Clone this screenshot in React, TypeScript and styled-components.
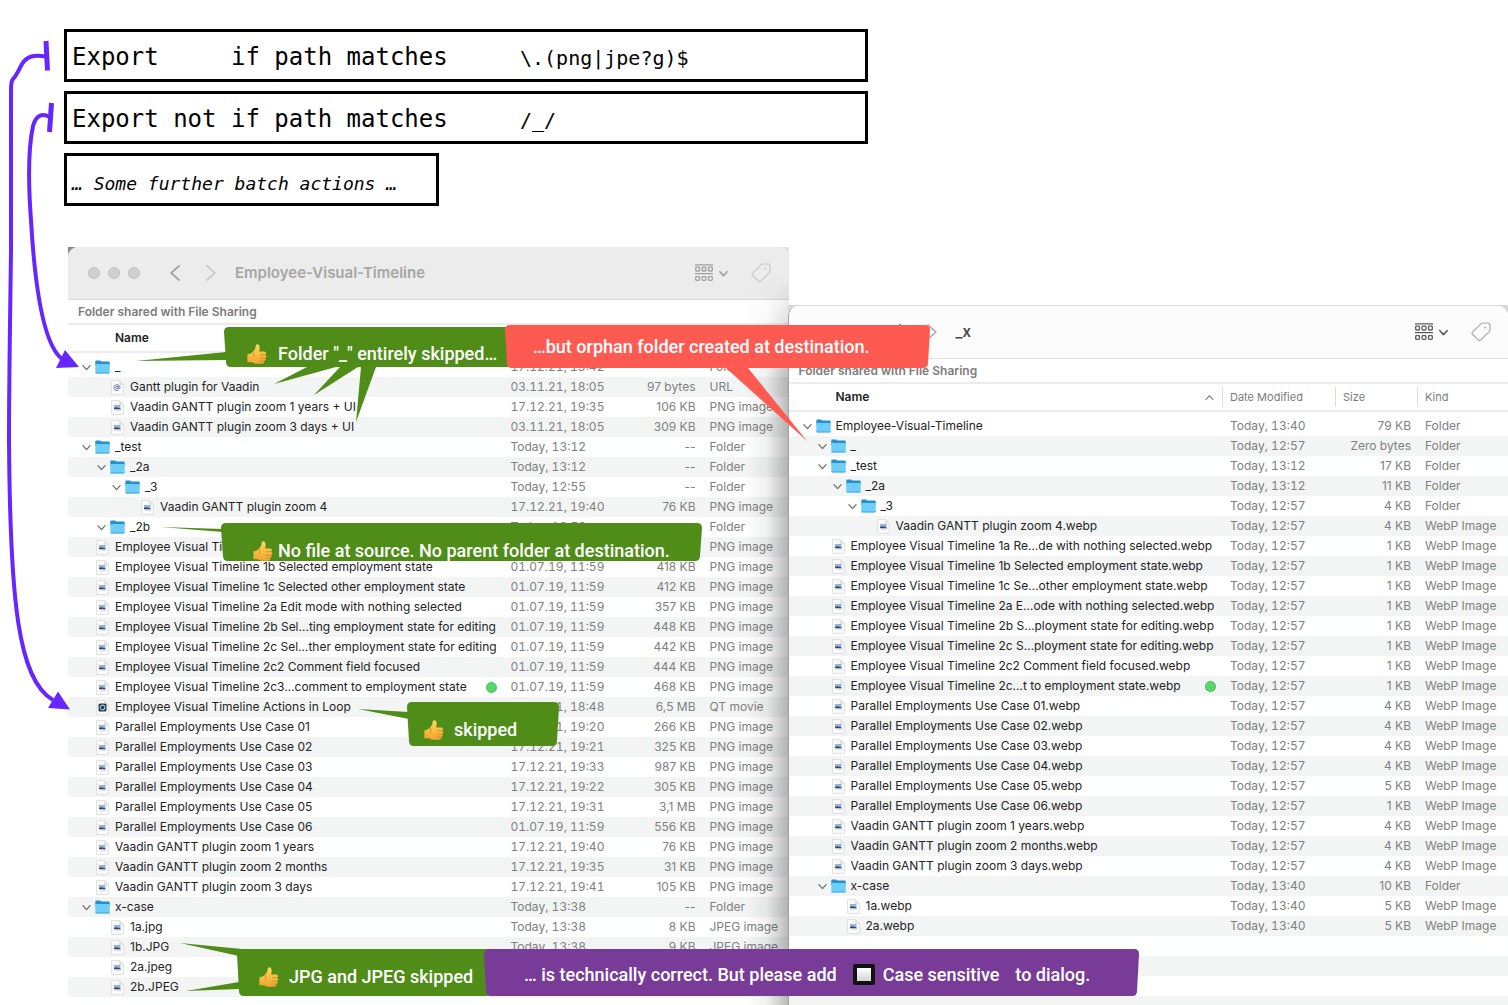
import React, { useId } from "react";
import styled, { createGlobalStyle } from "styled-components";

const uiFont = `Inter, "Liberation Sans", sans-serif`;
const monoFont = `"DejaVu Sans Mono", "Liberation Mono", monospace`;
const calloutFont = `Roboto, "Liberation Sans", sans-serif`;

const green = "#508d18";
const coral = "#ff5a52";
const purple = "#783b97";
const violet = "#6826ff";

const GlobalStyle = createGlobalStyle`
  * { box-sizing: border-box; }
  body { margin: 0; background: #fff; color: #232323; font-family: ${uiFont}; }
`;

const Canvas = styled.main`
  position: relative;
  display: flex;
  flex-direction: column;
  gap: 41px;
  height: 100vh;
  padding-top: 29px;
  overflow: hidden;
`;

const Rules = styled.section`
  display: flex;
  flex-direction: column;
  gap: 9px;
  padding-left: 64px;
  font-family: ${monoFont};
  color: #000;
`;

const Rule = styled.div<{ $short?: boolean }>`
  display: flex;
  align-items: center;
  width: ${(p) => (p.$short ? 375 : 804)}px;
  height: 53px;
  padding: 2px 5px 0;
  border: 3px solid #000;
  white-space: pre;
`;

const RuleText = styled.span`
  width: 448px;
  font-size: 24px;
  line-height: 28px;
`;

const RulePattern = styled.code`
  padding-top: 2px;
  font-family: inherit;
  font-size: 20px;
  line-height: 28px;
`;

const RuleNote = styled.em`
  padding-top: 6px;
  font-size: 18px;
  line-height: 24px;
`;

const Windows = styled.div`
  display: flex;
  flex: 1;
  min-height: 0;
  padding-left: 68px;
`;

const WindowSlot = styled.div<{ $front?: boolean }>`
  position: relative;
  flex: 1;
  min-width: 0;
  margin: ${(p) => (p.$front ? "58px 0 0 -1px" : "0")};
  padding-top: ${(p) => (p.$front ? 1 : 0)}px;
  overflow: hidden;
  background: ${(p) =>
    p.$front
      ? "linear-gradient(#d9d9d9, #d9d9d9 12px, #fff 12px)"
      : "linear-gradient(90deg, #8a8a8a 30px, #e2e2e2 30px)"};
  ${(p) =>
    !p.$front &&
    `&::after {
      content: "";
      position: absolute;
      inset: 30px 0 0 auto;
      width: 44px;
      background: linear-gradient(90deg, transparent, rgba(0,0,0,.06) 50%, rgba(0,0,0,.28));
      mask-image: linear-gradient(transparent, #000 100px);
      pointer-events: none;
    }`}
`;

const Window = styled.section<{ $front?: boolean }>`
  display: flex;
  flex-direction: column;
  height: 100%;
  overflow: hidden;
  border-radius: 10px 10px 0 0;
  background: #fff;
  border-left: ${(p) => (p.$front ? "1px solid #a2a2a2" : "0")};
`;

const Toolbar = styled.header<{ $front?: boolean }>`
  display: flex;
  align-items: center;
  flex: none;
  height: 53px;
  padding: 0 ${(p) => (p.$front ? 17 : 18)}px 0 20px;
  border-bottom: 1px solid ${(p) => (p.$front ? "#e2e2e2" : "#d8d8d8")};
  background: ${(p) => (p.$front ? "#fcfcfc" : "#ececec")};
  color: ${(p) => (p.$front ? "#5c5c5c" : "#a0a0a0")};
`;

const Lights = styled.div`
  display: flex;
  gap: 8px;
  width: 79px;
`;

const Light = styled.button`
  width: 12px;
  height: 12px;
  padding: 0;
  border: 1px solid #c2c2c2;
  border-radius: 50%;
  background: #d0d0d0;
`;

const ToolButton = styled.button<{ $gap?: number; $faint?: boolean }>`
  display: flex;
  align-items: center;
  gap: 6px;
  margin-right: ${(p) => p.$gap ?? 0}px;
  padding: 0;
  border: 0;
  background: none;
  color: inherit;
  opacity: ${(p) => (p.$faint ? 0.5 : 1)};
`;

const Title = styled.h2<{ $front?: boolean }>`
  flex: 1;
  margin: 0;
  font-size: 15px;
  line-height: 20px;
  font-weight: 600;
  color: ${(p) => (p.$front ? "#484848" : "#a6a6a6")};
`;

const SharedNote = styled.p`
  flex: none;
  margin: 0;
  padding-left: 10px;
  border-bottom: 2px solid #ececec;
  font-size: 12px;
  line-height: 23px;
  font-weight: 600;
  color: #7c7c7c;
`;

const Listing = styled.div<{ $front?: boolean }>`
  flex: 1;
  min-height: 0;
  overflow: hidden;
  background: ${(p) =>
    p.$front
      ? "repeating-linear-gradient(#fff 0 20px, #f3f5f5 20px 40px) 0 32px no-repeat"
      : "#fff"};
`;

const Table = styled.table`
  width: 100%;
  table-layout: fixed;
  border-collapse: separate;
  border-spacing: 0;
  font-size: 12px;
  line-height: 20px;
  tbody tr:nth-child(odd) td { background: #fff; }
  tbody tr:nth-child(even) td { background: #f3f5f5; }
`;

const Col = styled.col<{ $w?: number }>`
  width: ${(p) => (p.$w ? p.$w + "px" : "auto")};
`;

const Head = styled.th<{ $name?: boolean }>`
  height: 32px;
  padding: 0 0 6px ${(p) => (p.$name ? 47 : 0)}px;
  background: linear-gradient(#ececec, #ececec) 0 26px / 100% 2px no-repeat #fff;
  text-align: left;
  font-size: ${(p) => (p.$name ? 12 : 11)}px;
  font-weight: ${(p) => (p.$name ? 600 : 400)};
  color: ${(p) => (p.$name ? "#232323" : "#7c7c7c")};
`;

const HeadLabel = styled.div<{ $ruled?: boolean }>`
  display: flex;
  align-items: center;
  justify-content: space-between;
  height: 20px;
  padding: 0 8px 0 ${(p) => (p.$ruled ? 7 : 0)}px;
  border-left: ${(p) => (p.$ruled ? "1px solid #dcdcdc" : "0")};
  svg { color: #7c7c7c; }
`;

const Cell = styled.td<{ $right?: boolean; $date?: boolean }>`
  height: 20px;
  padding: 0 ${(p) => (p.$right ? 6 : 0)}px 0 ${(p) => (p.$right ? 0 : 8)}px;
  text-align: ${(p) => (p.$right ? "right" : "left")};
  font-variant-numeric: ${(p) => (p.$date ? "tabular-nums" : "normal")};
  color: #808080;
  white-space: nowrap;
`;

const NameCell = styled.td<{ $level: number }>`
  height: 20px;
  padding: 0 6px 0 ${(p) => 14 + 15 * p.$level}px;
  white-space: nowrap;
`;

const NameRow = styled.div`
  display: flex;
  align-items: center;
  height: 20px;
`;

const Twisty = styled.span`
  display: flex;
  width: 13px;
  flex: none;
  color: #6e6e6e;
`;

const IconBox = styled.span`
  display: flex;
  justify-content: center;
  width: 15px;
  margin-right: 5px;
  flex: none;
`;

const Dot = styled.span`
  width: 11px;
  height: 11px;
  margin-left: auto;
  border: 1px solid #41c558;
  border-radius: 50%;
  background: #57d66b;
`;

const CalloutBox = styled.aside<{ $x: number; $y: number; $w: number; $h: number; $pad: number; $drop: number }>`
  position: absolute;
  left: ${(p) => p.$x}px;
  top: ${(p) => p.$y}px;
  display: flex;
  align-items: center;
  width: ${(p) => p.$w}px;
  height: ${(p) => p.$h}px;
  padding: ${(p) => p.$drop}px 0 0 ${(p) => p.$pad}px;
  font-family: ${calloutFont};
  font-size: 18px;
  line-height: 24px;
  font-weight: 500;
  color: #fff;
  white-space: nowrap;
`;

const Bubble = styled.svg`
  position: absolute;
  left: 0;
  top: 0;
  overflow: visible;
`;

const CalloutText = styled.span`
  position: relative;
`;

const ThumbSvg = styled.svg<{ $gap: number }>`
  position: relative;
  flex: none;
  margin-right: ${(p) => p.$gap}px;
`;

const TickLabel = styled.label`
  position: relative;
  display: flex;
  align-items: center;
  gap: 8px;
  margin: 0 16px;
`;

const Tick = styled.input`
  appearance: none;
  width: 22px;
  height: 21px;
  margin: 0;
  border: 4px solid #111;
  border-radius: 2px;
  background: linear-gradient(#fff, #d4d4d4);
`;

const Arrows = styled.svg`
  position: absolute;
  left: 0;
  top: 0;
  pointer-events: none;
`;

function Chevron({ dir, size = 9, width = 1.4 }: { dir: "down" | "left" | "right" | "up"; size?: number; width?: number }) {
  const d = {
    down: "M1 3 L5 7.4 L9 3",
    up: "M1 7.4 L5 3 L9 7.4",
    left: "M7.6 0.6 L2.6 5 L7.6 9.4",
    right: "M2.4 0.6 L7.4 5 L2.4 9.4",
  }[dir];
  return (
    <svg width={size} height={size} viewBox="0 0 10 10" fill="none" stroke="currentColor" strokeWidth={width} strokeLinecap="round" strokeLinejoin="round">
      <path d={d} />
    </svg>
  );
}

function GroupIcon() {
  return (
    <svg width="18" height="18" viewBox="0 0 18 18" fill="none" stroke="currentColor" strokeWidth="1.3">
      <path d="M0 .8H18M0 9.6H18" />
      {[0, 1, 2].map((i) => (
        <g key={i}>
          <rect x={0.7 + i * 6.4} y="3.2" width="3.8" height="3.8" rx=".8" />
          <rect x={0.7 + i * 6.4} y="12.6" width="3.8" height="3.8" rx=".8" />
        </g>
      ))}
    </svg>
  );
}

function TagIcon() {
  return (
    <svg width="20" height="20" viewBox="0 0 20 20" fill="none" stroke="currentColor" strokeWidth="1.2" strokeLinejoin="round">
      <path d="M1.4 10.4 L10 1.8 Q10.8 1 12 1 L16.4 1 Q19 1 19 3.6 L19 7.6 Q19 8.8 18.2 9.6 L9.6 18.2 Q8.6 19.2 7.6 18.2 L1.4 12.2 Q.6 11.3 1.4 10.4 Z" />
      <circle cx="14" cy="5.6" r=".9" fill="currentColor" stroke="none" />
    </svg>
  );
}

function FolderIcon() {
  return (
    <svg width="15" height="14" viewBox="0 0 15 14">
      <path d="M.3 1.6Q.3.5 1.4.5H5l1.3 1H13.6Q14.7 1.5 14.7 2.6V6H.3Z" fill="#2590cc" />
      <path d="M.3 4H14.7V12.4Q14.7 13.5 13.6 13.5H1.4Q.3 13.5 .3 12.4Z" fill="#6fcdfa" />
      <path d="M.3 12.2H14.7Q14.7 13.5 13.6 13.5H1.4Q.3 13.5 .3 12.2Z" fill="#4fb0e4" />
    </svg>
  );
}

function FileIcon({ kind }: { kind: string }) {
  return (
    <svg width="13" height="15" viewBox="0 0 13 15">
      <path d="M.5 .5H8.5L12.5 4.5V14.5H.5Z" fill="#fafafa" stroke="#e2e2e2" />
      <path d="M8.5 .5V4.5H12.5Z" fill="#e4e4e4" stroke="#dcdcdc" strokeWidth=".6" />
      {kind === "URL" ? (
        <g fill="none" stroke="#5f6fb0" strokeWidth=".9">
          <circle cx="6" cy="7.5" r="1.3" />
          <path d="M7.4 6V8.2Q8.6 9.4 9 7.5A3 3 0 1 0 7.6 10.1" />
        </g>
      ) : kind === "QT movie" ? (
        <g>
          <rect x="2.5" y="3.5" width="8" height="8" rx="1.6" fill="#26333f" />
          <circle cx="6.5" cy="7.5" r="2.3" fill="none" stroke="#9cc6e6" strokeWidth="1.2" />
        </g>
      ) : (
        <g>
          <rect x="3" y="5" width="6.5" height="3" fill="#8fb4ea" />
          <path d="M3 8L5 7.2L9.5 8.2V9.2H3Z" fill="#3c465c" />
          <rect x="4.5" y="9.2" width="5.5" height="1.2" fill="#b8bcc2" />
        </g>
      )}
    </svg>
  );
}

function Thumb({ gap }: { gap: number }) {
  const id = useId();
  return (
    <ThumbSvg $gap={gap} width="20" height="20" viewBox="0 0 20 20" role="img" aria-label="Thumbs up">
      <defs>
        <linearGradient id={id} x1="0" y1="0" x2="0" y2="1">
          <stop offset="0" stopColor="#ffd75a" />
          <stop offset="1" stopColor="#f0a431" />
        </linearGradient>
      </defs>
      <path
        d="M.4 10.5Q3.5 10 6 7.8Q8.7 5 8.7 2Q8.7 .2 10.2 .2Q12.8 .4 12.7 4.2L12.2 7.6H17.2Q19.2 7.8 19 9.4Q18.9 10.4 18 10.7Q19.6 11.3 19.3 12.8Q19 14 17.9 14.1Q19 14.9 18.5 16.1Q18 17 16.9 17.1Q17.6 18 16.9 18.9Q16.3 19.7 14.5 19.7H9Q6.5 19.5 5.3 18.3Q3 18 .4 18.3Z"
        fill={`url(#${id})`}
      />
      <path d="M13.5 10.7H18M13.3 14.1H17.9M13 17.1H16.9M6 8Q7.5 10.5 6.6 12.4" fill="none" stroke="#cf8324" strokeWidth=".8" strokeLinecap="round" />
    </ThumbSvg>
  );
}

type Entry = [level: number, name: string, date: string, size: string, kind: string, tagged?: boolean];

const source: Entry[] = [
  [0, "_", "17.12.21, 13:42", "--", "Folder"],
  [1, "Gantt plugin for Vaadin", "03.11.21, 18:05", "97 bytes", "URL"],
  [1, "Vaadin GANTT plugin zoom 1 years + UI", "17.12.21, 19:35", "106 KB", "PNG image"],
  [1, "Vaadin GANTT plugin zoom 3 days + UI", "03.11.21, 18:05", "309 KB", "PNG image"],
  [0, "_test", "Today, 13:12", "--", "Folder"],
  [1, "_2a", "Today, 13:12", "--", "Folder"],
  [2, "_3", "Today, 12:55", "--", "Folder"],
  [3, "Vaadin GANTT plugin zoom 4", "17.12.21, 19:40", "76 KB", "PNG image"],
  [1, "_2b", "Today, 12:56", "--", "Folder"],
  [0, "Employee Visual Timeline", "", "", "PNG image"],
  [0, "Employee Visual Timeline 1b Selected employment state", "01.07.19, 11:59", "418 KB", "PNG image"],
  [0, "Employee Visual Timeline 1c Selected other employment state", "01.07.19, 11:59", "412 KB", "PNG image"],
  [0, "Employee Visual Timeline 2a Edit mode with nothing selected", "01.07.19, 11:59", "357 KB", "PNG image"],
  [0, "Employee Visual Timeline 2b Sel…ting employment state for editing", "01.07.19, 11:59", "448 KB", "PNG image"],
  [0, "Employee Visual Timeline 2c Sel…ther employment state for editing", "01.07.19, 11:59", "442 KB", "PNG image"],
  [0, "Employee Visual Timeline 2c2 Comment field focused", "01.07.19, 11:59", "444 KB", "PNG image"],
  [0, "Employee Visual Timeline 2c3…comment to employment state", "01.07.19, 11:59", "468 KB", "PNG image", true],
  [0, "Employee Visual Timeline Actions in Loop", "17.12.21, 18:48", "6,5 MB", "QT movie"],
  [0, "Parallel Employments Use Case 01", "17.12.21, 19:20", "266 KB", "PNG image"],
  [0, "Parallel Employments Use Case 02", "17.12.21, 19:21", "325 KB", "PNG image"],
  [0, "Parallel Employments Use Case 03", "17.12.21, 19:33", "987 KB", "PNG image"],
  [0, "Parallel Employments Use Case 04", "17.12.21, 19:22", "305 KB", "PNG image"],
  [0, "Parallel Employments Use Case 05", "17.12.21, 19:31", "3,1 MB", "PNG image"],
  [0, "Parallel Employments Use Case 06", "01.07.19, 11:59", "556 KB", "PNG image"],
  [0, "Vaadin GANTT plugin zoom 1 years", "17.12.21, 19:40", "76 KB", "PNG image"],
  [0, "Vaadin GANTT plugin zoom 2 months", "17.12.21, 19:35", "31 KB", "PNG image"],
  [0, "Vaadin GANTT plugin zoom 3 days", "17.12.21, 19:41", "105 KB", "PNG image"],
  [0, "x-case", "Today, 13:38", "--", "Folder"],
  [1, "1a.jpg", "Today, 13:38", "8 KB", "JPEG image"],
  [1, "1b.JPG", "Today, 13:38", "9 KB", "JPEG image"],
  [1, "2a.jpeg", "", "", ""],
  [1, "2b.JPEG", "", "", ""],
];

const destination: Entry[] = [
  [0, "Employee-Visual-Timeline", "Today, 13:40", "79 KB", "Folder"],
  [1, "_", "Today, 12:57", "Zero bytes", "Folder"],
  [1, "_test", "Today, 13:12", "17 KB", "Folder"],
  [2, "_2a", "Today, 13:12", "11 KB", "Folder"],
  [3, "_3", "Today, 12:57", "4 KB", "Folder"],
  [4, "Vaadin GANTT plugin zoom 4.webp", "Today, 12:57", "4 KB", "WebP Image"],
  [1, "Employee Visual Timeline 1a Re…de with nothing selected.webp", "Today, 12:57", "1 KB", "WebP Image"],
  [1, "Employee Visual Timeline 1b Selected employment state.webp", "Today, 12:57", "1 KB", "WebP Image"],
  [1, "Employee Visual Timeline 1c Se…other employment state.webp", "Today, 12:57", "1 KB", "WebP Image"],
  [1, "Employee Visual Timeline 2a E…ode with nothing selected.webp", "Today, 12:57", "1 KB", "WebP Image"],
  [1, "Employee Visual Timeline 2b S…ployment state for editing.webp", "Today, 12:57", "1 KB", "WebP Image"],
  [1, "Employee Visual Timeline 2c S…ployment state for editing.webp", "Today, 12:57", "1 KB", "WebP Image"],
  [1, "Employee Visual Timeline 2c2 Comment field focused.webp", "Today, 12:57", "1 KB", "WebP Image"],
  [1, "Employee Visual Timeline 2c…t to employment state.webp", "Today, 12:57", "1 KB", "WebP Image", true],
  [1, "Parallel Employments Use Case 01.webp", "Today, 12:57", "4 KB", "WebP Image"],
  [1, "Parallel Employments Use Case 02.webp", "Today, 12:57", "4 KB", "WebP Image"],
  [1, "Parallel Employments Use Case 03.webp", "Today, 12:57", "4 KB", "WebP Image"],
  [1, "Parallel Employments Use Case 04.webp", "Today, 12:57", "4 KB", "WebP Image"],
  [1, "Parallel Employments Use Case 05.webp", "Today, 12:57", "5 KB", "WebP Image"],
  [1, "Parallel Employments Use Case 06.webp", "Today, 12:57", "1 KB", "WebP Image"],
  [1, "Vaadin GANTT plugin zoom 1 years.webp", "Today, 12:57", "4 KB", "WebP Image"],
  [1, "Vaadin GANTT plugin zoom 2 months.webp", "Today, 12:57", "4 KB", "WebP Image"],
  [1, "Vaadin GANTT plugin zoom 3 days.webp", "Today, 12:57", "4 KB", "WebP Image"],
  [1, "x-case", "Today, 13:40", "10 KB", "Folder"],
  [2, "1a.webp", "Today, 13:40", "5 KB", "WebP Image"],
  [2, "2a.webp", "Today, 13:40", "5 KB", "WebP Image"],
];

function FileWindow({ title, entries, front }: { title: string; entries: Entry[]; front?: boolean }) {
  return (
    <WindowSlot $front={front}>
      <Window $front={front} aria-label={title}>
        <Toolbar $front={front}>
          <Lights>
            {!front && ["Close", "Minimise", "Zoom"].map((n) => <Light key={n} aria-label={n} />)}
          </Lights>
          <ToolButton $gap={20} aria-label="Back"><Chevron dir="left" size={16} width={1.1} /></ToolButton>
          <ToolButton $gap={16} $faint aria-label="Forward"><Chevron dir="right" size={16} width={1} /></ToolButton>
          <Title $front={front}>{title}</Title>
          <ToolButton $gap={23} aria-label="Group items"><GroupIcon /><Chevron dir="down" width={1.8} /></ToolButton>
          <ToolButton $faint aria-label="Edit tags"><TagIcon /></ToolButton>
        </Toolbar>
        <SharedNote>Folder shared with File Sharing</SharedNote>
        <Listing $front={front}>
          <Table>
            <colgroup>
              <Col />
              <Col $w={113} />
              <Col $w={front ? 82 : 86} />
              <Col $w={front ? 91 : 87} />
            </colgroup>
            <thead>
              <tr>
                <Head $name scope="col"><HeadLabel>Name{front && <Chevron dir="up" width={1.2} />}</HeadLabel></Head>
                {["Date Modified", "Size", "Kind"].map((h) => (
                  <Head key={h} scope="col" aria-label={h}>{front && <HeadLabel $ruled>{h}</HeadLabel>}</Head>
                ))}
              </tr>
            </thead>
            <tbody>
              {entries.map(([level, name, date, size, kind, tagged]) => (
                <tr key={name}>
                  <NameCell $level={level}>
                    <NameRow>
                      <Twisty>{kind === "Folder" && <Chevron dir="down" />}</Twisty>
                      <IconBox>{kind === "Folder" ? <FolderIcon /> : <FileIcon kind={kind} />}</IconBox>
                      {name}
                      {tagged && <Dot role="img" aria-label="Green tag" />}
                    </NameRow>
                  </NameCell>
                  <Cell $date>{date}</Cell>
                  <Cell $right>{size}</Cell>
                  <Cell>{kind}</Cell>
                </tr>
              ))}
            </tbody>
          </Table>
        </Listing>
      </Window>
    </WindowSlot>
  );
}

interface CalloutProps {
  x: number;
  y: number;
  w: number;
  h: number;
  color: string;
  pad: number;
  drop?: number;
  tails?: string;
  children: React.ReactNode;
}

/* A hand-cut sign: the sides lean inwards towards the bottom, the tails are in the sign's own coordinates. */
function Callout({ x, y, w, h, color, pad, drop = 0, tails, children }: CalloutProps) {
  return (
    <CalloutBox $x={x} $y={y} $w={w} $h={h} $pad={pad} $drop={drop}>
      <Bubble width={w} height={h} fill={color} aria-hidden="true">
        <path d={`M5 0H${w - 5}Q${w} 0 ${w} 5L${w - 2} ${h - 5}Q${w - 2} ${h} ${w - 7} ${h}H7Q2 ${h} 2 ${h - 5}L0 5Q0 0 5 0Z`} />
        {tails && <path d={tails} />}
      </Bubble>
      {children}
    </CalloutBox>
  );
}

export default function App() {
  return (
    <>
      <GlobalStyle />
      <Canvas>
        <Rules>
          <Rule><RuleText>Export     if path matches</RuleText><RulePattern>{"\\.(png|jpe?g)$"}</RulePattern></Rule>
          <Rule><RuleText>Export not if path matches</RuleText><RulePattern>/_/</RulePattern></Rule>
          <Rule $short><RuleNote>… Some further batch actions …</RuleNote></Rule>
        </Rules>
        <Windows>
          <FileWindow title="Employee-Visual-Timeline" entries={source} />
          <FileWindow title="_x" entries={destination} front />
        </Windows>

        <Callout x={224} y={327} w={290} h={40} color={green} pad={23} drop={14}
          tails="M2 25L-88 34L2 33ZM83 40L50 57L112 40ZM116 40L90 68L134 40ZM137 40L132 95L152 40Z">
          <Thumb gap={11} />
          <CalloutText>Folder "_" entirely skipped…</CalloutText>
        </Callout>
        <Callout x={505} y={325} w={425} h={43} color={coral} pad={28} tails="M221 43L302 116L243 43Z">
          <CalloutText>…but orphan folder created at destination.</CalloutText>
        </Callout>
        <Callout x={221} y={523} w={481} h={38} color={green} pad={32} drop={18} tails="M2 6L-60 4L2 9Z">
          <Thumb gap={5} />
          <CalloutText>No file at source. No parent folder at destination.</CalloutText>
        </Callout>
        <Callout x={407} y={702} w={152} h={44} color={green} pad={17} drop={11} tails="M2 10L-49 7L2 17Z">
          <Thumb gap={10} />
          <CalloutText>skipped</CalloutText>
        </Callout>
        <Callout x={237} y={949} w={256} h={47} color={green} pad={22} drop={9} tails="M5 0L-57 -6L2 7ZM2 33L-51 42L2 40Z">
          <Thumb gap={10} />
          <CalloutText>JPG and JPEG skipped</CalloutText>
        </Callout>
        <Callout x={484} y={949} w={655} h={47} color={purple} pad={40} drop={4}>
          <CalloutText>… is technically correct. But please add</CalloutText>
          <TickLabel><Tick type="checkbox" />Case sensitive</TickLabel>
          <CalloutText>to dialog.</CalloutText>
        </Callout>

        <Arrows width="90" height="730" fill="none" stroke={violet} strokeWidth="4" aria-hidden="true">
          <path d="M46 41L47.5 70.5M51.5 103L49.5 132" strokeWidth="5" />
          <path d="M46 56.5C34 54.5 27 56 22 64C18 71 17 75 13 79Q11 81 11 90V250C10 330 9 380 9 440C10 600 18 680 53 700" />
          <path d="M50 117C42 113 36 115 33 126C29 145 28 180 31 220C35 290 44 345 62 359" />
          <path d="M79 367L65 350L56 368ZM70 709.5L58 691.5L48 708Z" fill={violet} stroke="none" />
        </Arrows>
      </Canvas>
    </>
  );
}
